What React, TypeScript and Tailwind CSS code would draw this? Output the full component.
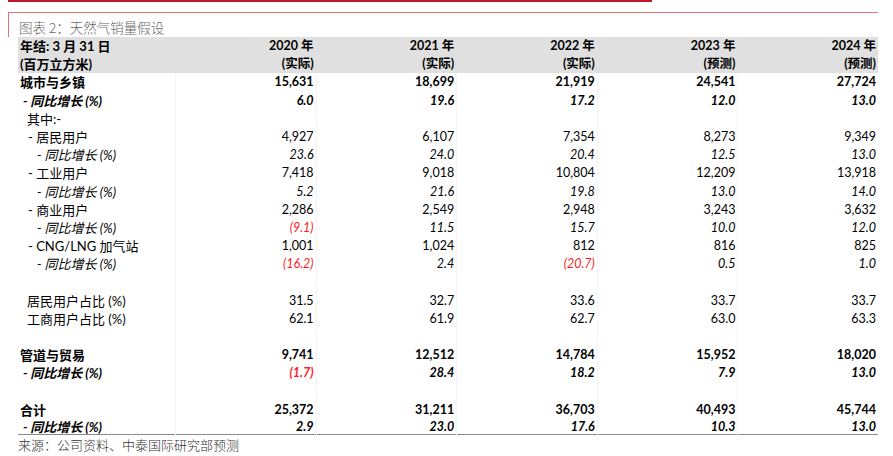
import React from "react";

type Cell = { v: string; red?: boolean };
type Row = {
  label: string;
  indent: string;
  style: "bold" | "boldItalic" | "normal" | "italic" | "header";
  values: (string | Cell)[];
  last?: boolean;
};

const R = (v: string): Cell => ({ v, red: true });

const rows: Row[] = [
  { label: "年结: 3 月 31 日", indent: "pl-[2px]", style: "header", values: ["2020 年", "2021 年", "2022 年", "2023 年", "2024 年"] },
  { label: "(百万立方米)", indent: "pl-[2px]", style: "header", values: ["(实际)", "(实际)", "(实际)", "(预测)", "(预测)"] },
  { label: "城市与乡镇", indent: "pl-[2px]", style: "bold", values: ["15,631", "18,699", "21,919", "24,541", "27,724"] },
  { label: "- 同比增长 (%)", indent: "pl-[5px]", style: "boldItalic", values: ["6.0", "19.6", "17.2", "12.0", "13.0"] },
  { label: "其中:-", indent: "pl-[9px]", style: "normal", values: ["", "", "", "", ""] },
  { label: "- 居民用户", indent: "pl-[10px]", style: "normal", values: ["4,927", "6,107", "7,354", "8,273", "9,349"] },
  { label: "- 同比增长 (%)", indent: "pl-[19px]", style: "italic", values: ["23.6", "24.0", "20.4", "12.5", "13.0"] },
  { label: "- 工业用户", indent: "pl-[10px]", style: "normal", values: ["7,418", "9,018", "10,804", "12,209", "13,918"] },
  { label: "- 同比增长 (%)", indent: "pl-[19px]", style: "italic", values: ["5.2", "21.6", "19.8", "13.0", "14.0"] },
  { label: "- 商业用户", indent: "pl-[10px]", style: "normal", values: ["2,286", "2,549", "2,948", "3,243", "3,632"] },
  { label: "- 同比增长 (%)", indent: "pl-[19px]", style: "italic", values: [R("(9.1)"), "11.5", "15.7", "10.0", "12.0"] },
  { label: "- CNG/LNG 加气站", indent: "pl-[10px]", style: "normal", values: ["1,001", "1,024", "812", "816", "825"] },
  { label: "- 同比增长 (%)", indent: "pl-[19px]", style: "italic", values: [R("(16.2)"), "2.4", R("(20.7)"), "0.5", "1.0"] },
  { label: "", indent: "", style: "normal", values: ["", "", "", "", ""] },
  { label: "居民用户占比 (%)", indent: "pl-[9px]", style: "normal", values: ["31.5", "32.7", "33.6", "33.7", "33.7"] },
  { label: "工商用户占比 (%)", indent: "pl-[9px]", style: "normal", values: ["62.1", "61.9", "62.7", "63.0", "63.3"] },
  { label: "", indent: "", style: "normal", values: ["", "", "", "", ""] },
  { label: "管道与贸易", indent: "pl-[2px]", style: "bold", values: ["9,741", "12,512", "14,784", "15,952", "18,020"] },
  { label: "- 同比增长 (%)", indent: "pl-[5px]", style: "boldItalic", values: [R("(1.7)"), "28.4", "18.2", "7.9", "13.0"] },
  { label: "", indent: "", style: "normal", values: ["", "", "", "", ""] },
  { label: "合计", indent: "pl-[2px]", style: "bold", values: ["25,372", "31,211", "36,703", "40,493", "45,744"] },
  { label: "- 同比增长 (%)", indent: "pl-[5px]", style: "boldItalic", values: ["2.9", "23.0", "17.6", "10.3", "13.0"], last: true },
];

const styleClass: Record<Row["style"], string> = {
  header: "font-bold",
  bold: "font-bold",
  boldItalic: "font-bold italic",
  normal: "font-normal",
  italic: "font-normal italic",
};

export default function App() {
  return (
    <div className="w-[893px] h-[456px] bg-white overflow-hidden text-black font-['Lato','Noto_Sans_CJK_SC',sans-serif]">
      <div className="ml-[8px] w-[644px] h-[2px] bg-[#c0162c]" />
      <div className="mt-[10px] ml-[8px] w-[870px] h-[25px] border-t border-l border-[#e57373] pl-[10px] pt-[6px]">
        <div className="text-[13.5px] leading-[16px] text-[#666] font-light font-['Noto_Sans_CJK_SC',sans-serif]">
          图表 2：天然气销量假设
        </div>
      </div>
      <div className="ml-[18px] w-[860px]">
        {rows.map((row, i) => (
          <div
            key={i}
            className={`grid grid-cols-[157px_repeat(5,1fr)] items-center text-[12.5px] ${
              row.style === "header" ? "bg-[#e0e0e0]" : ""
            } ${row.last ? "h-[16.3px] border-b-[1.5px] border-[#8a8a8a]" : "h-[18.2px]"} ${styleClass[row.style]}`}
          >
            <div className={`whitespace-nowrap leading-[16px] text-[13px] ${row.indent}`}>{row.label}</div>
            {row.values.map((c, j) => {
              const cell = typeof c === "string" ? { v: c } : c;
              return (
                <div
                  key={j}
                  className={`h-full flex items-center justify-end pr-[2px] whitespace-nowrap leading-[16px] ${
                    row.style === "header" ? "" : "border-l border-[#f4f4f4]"
                  } ${cell.red ? "text-[#ff1a1a]" : ""}`}
                >
                  {cell.v}
                </div>
              );
            })}
          </div>
        ))}
      </div>
      <div className="ml-[18px] mt-[2px] text-[13px] leading-[16px] text-[#333] font-light font-['Noto_Sans_CJK_SC',sans-serif]">
        来源：公司资料、中泰国际研究部预测
      </div>
    </div>
  );
}
